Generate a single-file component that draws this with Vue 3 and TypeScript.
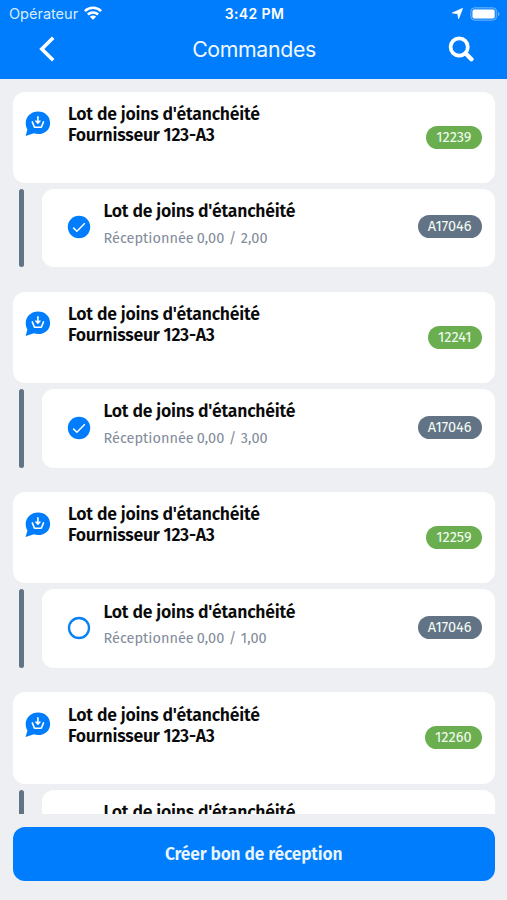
<script setup lang="ts">
interface Order {
  id: string
  quantity?: string
  lot?: string
  received: boolean
}

const orders: Order[] = [
  { id: '12239', quantity: '2,00', lot: 'A17046', received: true },
  { id: '12241', quantity: '3,00', lot: 'A17046', received: true },
  { id: '12259', quantity: '1,00', lot: 'A17046', received: false },
  { id: '12260', received: false },
]
</script>

<template>
  <div class="screen">
    <header class="header">
      <div class="status">
        <div class="carrier">
          <span class="carrier-name">Opérateur</span>
          <svg class="wifi" viewBox="0 0 18 14" fill="none" stroke="#fff" stroke-width="2.5">
            <path d="M.9 5.2a11.4 11.4 0 0 1 16.2 0" />
            <path d="M3.9 8.5a7.2 7.2 0 0 1 10.2 0" />
            <path d="M9 13.8 5.9 10.8a4.3 4.3 0 0 1 6.2 0z" fill="#fff" stroke="none" />
          </svg>
        </div>
        <span class="clock">3:42 PM</span>
        <div class="indicators">
          <svg class="location" viewBox="0 0 12 12"><path d="M11.6.4 7.2 11.7 6.2 6.2.3 5.4z" fill="#fff" stroke="#fff" stroke-width=".8" stroke-linejoin="round" /></svg>
          <svg class="battery" viewBox="0 0 30 14">
            <rect x=".7" y=".7" width="26" height="12.6" rx="4" fill="#fff" fill-opacity=".12" stroke="#fff" stroke-opacity=".35" />
            <rect x="2.5" y="2.5" width="22.2" height="9" rx="2" fill="#fff" />
            <path d="M28 4.8q1.6.8 1.6 2.2T28 9.2z" fill="#fff" fill-opacity=".4" />
          </svg>
        </div>
      </div>
      <nav class="nav">
        <svg class="back" viewBox="0 0 16 26"><path d="M14.2 1.8 2.8 13l11.4 11.2" fill="none" stroke="#fff" stroke-width="3.6" /></svg>
        <h1 class="title">Commandes</h1>
        <svg class="search" viewBox="0 0 26 26" fill="none" stroke="#fff">
          <circle cx="11.2" cy="11" r="8.6" stroke-width="3.7" />
          <path d="m17.5 17.3 5.9 5.9" stroke-width="4.4" stroke-linecap="round" />
        </svg>
      </nav>
    </header>

    <main class="list">
      <section v-for="order in orders" :key="order.id" class="group">
        <article class="order">
          <svg class="bubble" viewBox="0 0 26 26">
            <path d="M13.1.5C20 .5 25.1 5.2 25.1 11.9S20 23 13.1 23c-1.5 0-2.8-.2-4.1-.7L.6 25l1.8-6.5C1.2 16.6.7 14.4.7 12.1.7 5.3 6.2.5 13.1.5z" fill="#007dfc" />
            <path d="M7.3 10.9 9.5 16.3h6.8l2.200-5.400M12.900 5.700v6.200M10.900 10l2 2.100 2-2.100" fill="none" stroke="#fff" stroke-width="1.600" stroke-linecap="round" stroke-linejoin="round" />
          </svg>
          <div class="order-name">Lot de joins d'étanchéité<br />Fournisseur 123-A3</div>
          <span class="badge green">{{ order.id }}</span>
        </article>
        <div class="line">
          <i class="rail"></i>
          <article class="item">
            <svg class="check" viewBox="0 0 24 24">
              <template v-if="order.received">
                <circle cx="12" cy="12" r="11.2" fill="#007dfc" />
                <path d="m6.2 12.6 3.7 3.7 7.9-8" fill="none" stroke="#fff" stroke-width="1.5" />
              </template>
              <circle v-else cx="12" cy="12" r="10" fill="#fff" stroke="#0a80f7" stroke-width="2.3" />
            </svg>
            <div class="item-text">
              <div class="item-name">Lot de joins d'étanchéité</div>
              <div v-if="order.quantity" class="quantity"><span>Réceptionnée</span><span>0,00</span><span class="slash">/</span><span>{{ order.quantity }}</span></div>
            </div>
            <span v-if="order.lot" class="badge slate">{{ order.lot }}</span>
          </article>
        </div>
      </section>
    </main>

    <footer class="footer">
      <button class="create" type="button">Créer bon de réception</button>
    </footer>
  </div>
</template>

<style>
body {
  background: #eeeff3;
}
</style>

<style scoped>
.screen {
  display: flex;
  flex-direction: column;
  width: 100%;
  height: 900px;
  overflow: hidden;
  background: #eeeff3;
  font-family: "Fira Sans", "Noto Sans", sans-serif;
  color: #0a0a0a;
}
.header {
  flex: none;
  height: 79px;
  background: #007dfc;
  color: #fff;
  font-family: Inter, sans-serif;
}
.status {
  display: grid;
  grid-template-columns: 1fr auto 1fr;
  align-items: center;
  height: 27px;
  padding: 0 7px 0 9px;
}
.carrier,
.indicators {
  display: flex;
  align-items: center;
}
.carrier-name {
  font-size: 14.5px;
  color: #d9ecff;
}
.wifi {
  width: 18px;
  height: 14px;
  margin-left: 6px;
  margin-top: -2px;
}
.clock {
  font-size: 14px;
  font-weight: 600;
  letter-spacing: 0.4px;
}
.indicators {
  justify-content: flex-end;
  gap: 7px;
}
.location {
  width: 11px;
  height: 11px;
}
.battery {
  width: 30px;
  height: 14px;
}
.nav {
  display: grid;
  grid-template-columns: 1fr auto 1fr;
  align-items: center;
  height: 44px;
  padding: 0 33px 0 39px;
}
.back {
  width: 16px;
  height: 26px;
}
.title {
  margin: 0 0 0 -5px;
  color: #f0f8ff;
  font-size: 21.3px;
  font-weight: 400;
  line-height: 28px;
  letter-spacing: -0.35px;
}
.search {
  width: 26px;
  height: 26px;
  justify-self: end;
}
.list {
  flex: none;
  box-sizing: border-box;
  height: 735px;
  overflow: hidden;
  padding: 12.5px 12.5px 0 13px;
}
.group {
  margin-bottom: 24.3px;
}
.order {
  display: flex;
  align-items: flex-start;
  box-sizing: border-box;
  height: 91.4px;
  padding: 0 13px 0 12px;
  border-radius: 12px;
  background: #fff;
}
.bubble {
  flex: none;
  width: 26px;
  height: 26px;
  margin-top: 19.5px;
}
.order-name {
  flex: 1;
  margin: 12.2px 0 0 17px;
  font-size: 17.6px;
  font-weight: 600;
  line-height: 21px;
  letter-spacing: -0.22px;
  white-space: nowrap;
}
.badge {
  flex: none;
  box-sizing: border-box;
  height: 23px;
  padding: 0 10px;
  border-radius: 12px;
  color: #f4fbf4;
  font-size: 14.5px;
  line-height: 23px;
}
.green {
  margin-top: 34px;
  background: #6aae4f;
}
.slate {
  margin-top: 26.5px;
  background: #627386;
}
.line {
  display: flex;
  gap: 18px;
  margin-top: 6px;
  padding-left: 6px;
}
.rail {
  flex: none;
  width: 5px;
  height: 78.6px;
  border-radius: 2.5px;
  background: #627386;
}
.item {
  flex: 1;
  display: flex;
  align-items: flex-start;
  box-sizing: border-box;
  height: 78.6px;
  padding: 0 13px 0 25px;
  border-radius: 12px;
  background: #fff;
}
.check {
  flex: none;
  width: 24px;
  height: 24px;
  margin-top: 26.5px;
}
.item-text {
  flex: 1;
  margin: 12.2px 0 0 12.5px;
  white-space: nowrap;
}
.item-name {
  font-size: 17.6px;
  font-weight: 600;
  line-height: 21px;
  letter-spacing: -0.22px;
}
.quantity {
  display: flex;
  gap: 3px;
  margin-top: 5.6px;
  color: #828b99;
  font-size: 14.5px;
  line-height: 20px;
}
.slash {
  margin: 0 1.5px;
}
.footer {
  padding: 13px 12.5px 0 13px;
}
.create {
  display: block;
  width: 100%;
  height: 54px;
  padding: 0;
  border: 0;
  border-radius: 12px;
  background: #007dfc;
  color: #e9f6ff;
  font-family: inherit;
  font-size: 17.4px;
  font-weight: 600;
  letter-spacing: -0.17px;
}
</style>
